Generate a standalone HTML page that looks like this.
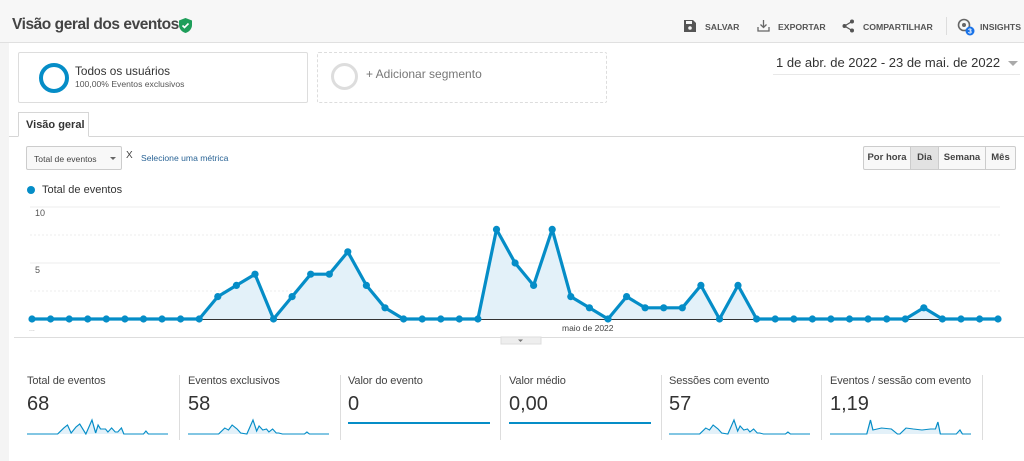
<!DOCTYPE html>
<html><head><meta charset="utf-8"><style>
*{margin:0;padding:0;box-sizing:border-box}
body{width:1024px;height:461px;overflow:hidden;background:#fff;font-family:"Liberation Sans",Arial,sans-serif;color:#333;position:relative}
.a{position:absolute}
.hdr{left:0;top:0;width:1024px;height:43px;background:#f7f7f7;border-bottom:1px solid #e0e0e0}
.strip{left:0;top:43px;width:9px;height:418px;background:#f4f4f4}
.tb{font-size:8.7px;color:#555;font-weight:bold;top:22px}
.met{top:375px;height:65px;border-right:1px solid #ddd}
.met .t{font-size:11px;color:#444;position:absolute;top:0;left:0;white-space:nowrap;letter-spacing:-0.1px}
.met .v{font-size:20px;color:#333;position:absolute;top:18px;left:0}
.met svg{position:absolute;top:40px;left:0}
.btn{font-size:9.5px;font-weight:bold;color:#444;height:24px;line-height:22px;text-align:center;border:1px solid #ccc;border-left:none;background:#f8f8f8;top:146px}
</style></head><body>
<div class="a hdr"></div>
<div class="a strip"></div>
<div class="a" style="left:12px;top:16px;font-size:15.5px;letter-spacing:-0.45px;font-weight:bold;color:#444">Visão geral dos eventos</div>
<svg class="a" style="left:179px;top:18px" width="13" height="15" viewBox="0 0 13 15"><path d="M6.5 0L13 2.5V7c0 4-3 7-6.5 8C3 14 0 11 0 7V2.5z" fill="#1e9e5a"/><path d="M3.5 7.5l2 2 4-4" stroke="#fff" stroke-width="1.6" fill="none"/></svg>
<svg class="a" style="left:684px;top:20px" width="12" height="12"><path d="M0 0h9l3 3v9H0z" fill="#555"/><rect x="2" y="1" width="6" height="3" fill="#f7f7f7"/><circle cx="6" cy="8" r="1.8" fill="#f7f7f7"/></svg>
<div class="a tb" style="left:705px">SALVAR</div>
<svg class="a" style="left:757px;top:19px" width="13" height="13"><path d="M6.5 1v7M3.5 5.5l3 3 3-3M1 8v4h11V8" stroke="#666" stroke-width="1.3" fill="none"/></svg>
<div class="a tb" style="left:778px">EXPORTAR</div>
<svg class="a" style="left:842px;top:19px" width="13" height="14"><circle cx="10" cy="2.5" r="2" fill="#555"/><circle cx="2.5" cy="7" r="2" fill="#555"/><circle cx="10" cy="11.5" r="2" fill="#555"/><path d="M10 2.5L2.5 7 10 11.5" stroke="#555" stroke-width="1.2" fill="none"/></svg>
<div class="a tb" style="left:863px">COMPARTILHAR</div>
<div class="a" style="left:946px;top:17px;width:1px;height:18px;background:#ddd"></div>
<svg class="a" style="left:957px;top:18px" width="20" height="20"><circle cx="7" cy="7" r="5.5" stroke="#666" stroke-width="1.6" fill="none"/><circle cx="7" cy="7" r="2" fill="#666"/><circle cx="13" cy="13" r="4.5" fill="#1a73e8"/><text x="13" y="15.5" font-size="7" fill="#fff" text-anchor="middle" font-family="Liberation Sans" font-weight="bold">3</text></svg>
<div class="a tb" style="left:980px">INSIGHTS</div>

<div class="a" style="left:18px;top:52px;width:290px;height:51px;border:1px solid #ddd;border-radius:2px"></div>
<div class="a" style="left:39px;top:63px;width:30px;height:30px;border:4px solid #058dc7;border-radius:50%"></div>
<div class="a" style="left:75px;top:64px;font-size:11.8px;color:#333">Todos os usuários</div>
<div class="a" style="left:75px;top:79px;font-size:8.6px;color:#555">100,00% Eventos exclusivos</div>
<div class="a" style="left:317px;top:52px;width:290px;height:51px;border:1px dashed #ddd;border-radius:2px"></div>
<div class="a" style="left:331px;top:63px;width:27px;height:27px;border:3px solid #ddd;border-radius:50%"></div>
<div class="a" style="left:366px;top:67px;font-size:12px;color:#777">+ Adicionar segmento</div>
<div class="a" style="left:776px;top:55px;font-size:13px;color:#333">1 de abr. de 2022 - 23 de mai. de 2022</div>
<div class="a" style="left:1008px;top:61px;border:5px solid transparent;border-top:5px solid #aaa"></div>
<div class="a" style="left:773px;top:74px;width:247px;height:1px;background:#e8e8e8"></div>

<div class="a" style="left:9px;top:136px;width:1015px;height:1px;background:#d6d6d6"></div>
<div class="a" style="left:18px;top:112px;width:71px;height:25px;border:1px solid #d6d6d6;border-bottom:1px solid #fff;background:#fff;font-size:11px;font-weight:bold;color:#333;padding:6px 0 0 7px">Visão geral</div>

<div class="a" style="left:26px;top:146px;width:96px;height:24px;border:1px solid #ccc;border-radius:2px;background:#f8f8f8;font-size:8.6px;color:#444;padding:7px 0 0 7px">Total de eventos</div>
<div class="a" style="left:110px;top:157px;border:3px solid transparent;border-top:3px solid #666"></div>
<div class="a" style="left:126px;top:150px;font-size:10px;color:#444">X</div>
<div class="a" style="left:141px;top:153px;font-size:8.6px;color:#2a6496">Selecione uma métrica</div>

<div class="a btn" style="left:863px;width:48px;border-left:1px solid #ccc;border-radius:2px 0 0 2px">Por hora</div>
<div class="a btn" style="left:911px;width:28px;background:#e2e2e2">Dia</div>
<div class="a btn" style="left:939px;width:47px">Semana</div>
<div class="a btn" style="left:986px;width:30px;border-radius:0 2px 2px 0">Mês</div>

<div class="a" style="left:27px;top:186px;width:8px;height:8px;border-radius:50%;background:#058dc7"></div>
<div class="a" style="left:42px;top:184px;font-size:11px;color:#333">Total de eventos</div>

<svg class="a" style="left:0;top:200px" width="1024" height="150" viewBox="0 200 1024 150">
<defs><marker id="m" markerWidth="8" markerHeight="8" refX="4" refY="4" markerUnits="userSpaceOnUse"><circle cx="4" cy="4" r="3.6" fill="#058dc7"/></marker></defs>
<g stroke="#eee" stroke-width="1"><line x1="30" y1="207" x2="1000" y2="207"/><line x1="30" y1="235" x2="1000" y2="235" stroke-dasharray="2 2"/><line x1="30" y1="263" x2="1000" y2="263"/><line x1="30" y1="291" x2="1000" y2="291" stroke-dasharray="2 2"/></g>
<text x="35" y="216" font-size="9" fill="#555" font-family="Liberation Sans">10</text>
<text x="35" y="273" font-size="9" fill="#555" font-family="Liberation Sans">5</text>
<polygon fill="#e3f1f9" points="199.2,319 217.8,296.6 236.4,285.4 255,274.2 273.5,319 292.1,296.6 310.7,274.2 329.3,274.2 347.8,251.8 366.4,285.4 385,307.8 403.6,319 477.9,319 496.5,229.4 515.1,263 533.6,285.4 552.2,229.4 570.8,296.6 589.4,307.8 608,319 626.6,296.6 645.1,307.8 663.7,307.8 682.3,307.8 700.9,285.4 719.5,319 738,285.4 756.6,319 905.3,319 923.8,307.8 942.4,319"/>
<line x1="30" y1="319.5" x2="1000" y2="319.5" stroke="#333" stroke-width="1"/>
<polyline fill="none" stroke="#058dc7" stroke-width="3.2" stroke-linejoin="round" marker-start="url(#m)" marker-mid="url(#m)" marker-end="url(#m)" points="32,319 50.6,319 69.2,319 87.7,319 106.3,319 124.9,319 143.5,319 162,319 180.6,319 199.2,319 217.8,296.6 236.4,285.4 255,274.2 273.5,319 292.1,296.6 310.7,274.2 329.3,274.2 347.8,251.8 366.4,285.4 385,307.8 403.6,319 422.2,319 440.8,319 459.3,319 477.9,319 496.5,229.4 515.1,263 533.6,285.4 552.2,229.4 570.8,296.6 589.4,307.8 608,319 626.6,296.6 645.1,307.8 663.7,307.8 682.3,307.8 700.9,285.4 719.5,319 738,285.4 756.6,319 775.2,319 793.8,319 812.4,319 830.9,319 849.5,319 868.1,319 886.7,319 905.3,319 923.8,307.8 942.4,319 961,319 979.6,319 998,319"/>
<text x="562" y="331" font-size="8.5" fill="#444" font-family="Liberation Sans">maio de 2022</text>
<text x="29" y="331" font-size="7" fill="#aaa" font-family="Liberation Sans">...</text>
<line x1="14" y1="337.5" x2="1024" y2="337.5" stroke="#ddd"/>
<rect x="501" y="337" width="40" height="7" fill="#eee" stroke="#ddd"/>
<path d="M518 339.5h5l-2.5 2.5z" fill="#777"/>
</svg>

<div class="a met" style="left:27px;width:153px"><div class="t">Total de eventos</div><div class="v">68</div>
<svg width="141" height="20" viewBox="0 0 115 20" preserveAspectRatio="none"><polyline fill="#e3f1f9" stroke="#058dc7" stroke-width="1" points="0,19 25,19 30,13 33,10 36,18 40,12 43,9 48,19 53,5 56,18 58,10 60,14 64,14 66,17 69,13 72,17 74,17 77,13 79,19 95,19 97,16 99,19 115,19"/></svg></div>
<div class="a met" style="left:188px;width:153px"><div class="t">Eventos exclusivos</div><div class="v">58</div>
<svg width="141" height="20" viewBox="0 0 115 20" preserveAspectRatio="none"><polyline fill="#e3f1f9" stroke="#058dc7" stroke-width="1" points="0,19 25,19 30,13 33,15 36,10 40,14 43,18 48,19 53,5 56,16 58,11 61,15 64,14 66,17 69,14 72,18 74,18 77,19 95,19 97,17 99,19 115,19"/></svg></div>
<div class="a met" style="left:348px;width:153px"><div class="t">Valor do evento</div><div class="v">0</div>
<svg width="145" height="20"><line x1="0" y1="8" x2="142" y2="8" stroke="#058dc7" stroke-width="2"/></svg></div>
<div class="a met" style="left:509px;width:153px"><div class="t">Valor médio</div><div class="v">0,00</div>
<svg width="145" height="20"><line x1="0" y1="8" x2="142" y2="8" stroke="#058dc7" stroke-width="2"/></svg></div>
<div class="a met" style="left:669px;width:153px"><div class="t">Sessões com evento</div><div class="v">57</div>
<svg width="141" height="20" viewBox="0 0 115 20" preserveAspectRatio="none"><polyline fill="#e3f1f9" stroke="#058dc7" stroke-width="1" points="0,19 25,19 30,13 33,15 36,10 40,14 43,18 48,19 53,5 56,16 58,11 61,15 64,14 66,17 69,14 72,18 74,18 77,19 95,19 97,17 99,19 115,19"/></svg></div>
<div class="a met" style="left:830px;width:153px;border-right:1px solid #ddd"><div class="t">Eventos / sessão com evento</div><div class="v">1,19</div>
<svg width="141" height="20" viewBox="0 0 115 20" preserveAspectRatio="none"><polyline fill="#e3f1f9" stroke="#058dc7" stroke-width="1" points="0,19 30,19 33,5 35,15 42,13 50,14 55,19 57,19 62,13 68,14 75,15 82,14 86,14 88,7 90,19 103,19 106,15 108,19 115,19"/></svg></div>
</body></html>
